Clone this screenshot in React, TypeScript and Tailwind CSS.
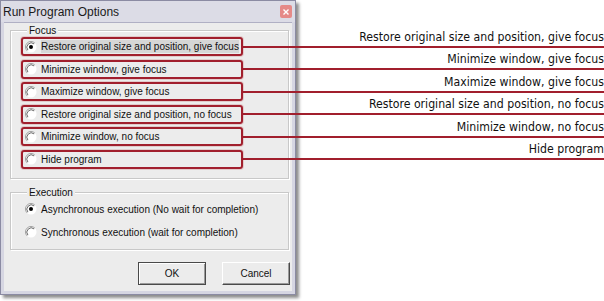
import React from "react";

function Radio({ checked }: { checked?: boolean }) {
  return (
    <svg width="12" height="12" viewBox="0 0 12 12" className="shrink-0">
      <circle cx="6" cy="6" r="5.5" fill="#ffffff" />
      <path d="M2.1 9.9 A5.5 5.5 0 0 1 9.9 2.1" fill="none" stroke="#a0a0a0" strokeWidth="1" />
      <path d="M2.9 9.1 A4.4 4.4 0 0 1 9.1 2.9" fill="none" stroke="#6a6a6a" strokeWidth="1" />
      {checked && <circle cx="6" cy="6" r="2" fill="#000000" />}
    </svg>
  );
}

function OptionRow({
  label,
  note,
  checked,
  focus,
}: {
  label: string;
  note: string;
  checked?: boolean;
  focus?: boolean;
}) {
  return (
    <div className="relative flex h-[19px] w-[222px] items-center rounded-[3px] border-2 border-[#a11f2d] pl-[2px] shadow-[0_0_0_1px_rgba(210,140,140,0.35)]">
      <Radio checked={checked} />
      <span className={focus ? "ml-[4px] whitespace-nowrap bg-[#d6d6d6] leading-[13px]" : "ml-[4px] whitespace-nowrap leading-[13px]"}>
        {label}
      </span>
      <div className="absolute left-full top-1/2 h-[2px] w-[364px] -translate-y-1/2 bg-[#a11f2d]">
        <span className="absolute bottom-[4px] right-[1px] whitespace-nowrap font-['DejaVu_Sans_Condensed','Liberation_Sans',sans-serif] text-[12.2px] leading-[14px] text-[#111]">
          {note}
        </span>
      </div>
    </div>
  );
}

function PlainRow({ label, checked }: { label: string; checked?: boolean }) {
  return (
    <div className="flex h-[19px] w-[240px] items-center border-2 border-transparent pl-[2px]">
      <Radio checked={checked} />
      <span className="ml-[4px] whitespace-nowrap leading-[13px]">{label}</span>
    </div>
  );
}

function Button({ children, isDefault }: { children: React.ReactNode; isDefault?: boolean }) {
  return (
    <div
      className={
        isDefault
          ? "flex h-[23px] w-[68px] items-center justify-center border border-[#4a4a4a] bg-[#ececec] shadow-[inset_1px_1px_0_#ffffff,inset_-1px_-1px_0_#9a9a9a]"
          : "flex h-[23px] w-[68px] items-center justify-center border border-b-[#4a4a4a] border-l-[#ffffff] border-r-[#4a4a4a] border-t-[#ffffff] bg-[#ececec] shadow-[inset_-1px_-1px_0_#9a9a9a]"
      }
    >
      {children}
    </div>
  );
}

export default function App() {
  const focusOptions = [
    { label: "Restore original size and position, give focus", checked: true, focus: true },
    { label: "Minimize window, give focus" },
    { label: "Maximize window, give focus" },
    { label: "Restore original size and position, no focus" },
    { label: "Minimize window, no focus" },
    { label: "Hide program" },
  ];

  return (
    <div className="relative h-[301px] w-[604px] overflow-hidden bg-white font-['Liberation_Sans',Arial,sans-serif] text-[10px] text-[#111]">
      <div className="flex h-[295px] w-[296px] flex-col border border-[#8b8ba3] bg-[#d6d6e2] shadow-[3px_3px_3px_rgba(0,0,0,0.45)]">
        {/* Title bar */}
        <div className="flex h-[21px] items-center justify-between bg-[#dcdce6] pr-[3px]">
          <span className="pl-[2px] text-[12px] leading-[16px] text-[#1a1a1a]">Run Program Options</span>
          <div className="flex h-[13px] w-[12px] items-center justify-center rounded-[2px] bg-[#e58a88]">
            <svg width="6" height="6" viewBox="0 0 6 6">
              <path d="M0.5 0.5 L5.5 5.5 M5.5 0.5 L0.5 5.5" stroke="#ffffff" strokeWidth="1.4" />
            </svg>
          </div>
        </div>

        {/* Body */}
        <div className="mx-[3px] mb-[3px] flex flex-1 flex-col border-t border-[#b0b0c4] bg-[#ececec] pl-[6px] pr-[3px]">
          <fieldset className="mt-[1px] border border-[#c8c8c8] pb-[9px] pl-[10px] shadow-[inset_1px_1px_0_#ffffff,1px_1px_0_#ffffff]">
            <legend className="ml-[6px] bg-[#ececec] px-[2px] leading-[13px]">Focus</legend>
            <div className="flex flex-col gap-[3.6px]">
              {focusOptions.map((o) => (
                <OptionRow key={o.label} label={o.label} note={o.label} checked={o.checked} focus={o.focus} />
              ))}
            </div>
          </fieldset>

          <fieldset className="mt-[7px] border border-[#c8c8c8] pb-[7px] pl-[10px] pt-[1px] shadow-[inset_1px_1px_0_#ffffff,1px_1px_0_#ffffff]">
            <legend className="ml-[6px] bg-[#ececec] px-[2px] leading-[13px]">Execution</legend>
            <div className="flex flex-col gap-[4px]">
              <PlainRow label="Asynchronous execution (No wait for completion)" checked />
              <PlainRow label="Synchronous execution (wait for completion)" />
            </div>
          </fieldset>

          <div className="mr-[-1px] mt-[12px] flex justify-end gap-[16px]">
            <Button isDefault>OK</Button>
            <Button>Cancel</Button>
          </div>
        </div>
      </div>
    </div>
  );
}
